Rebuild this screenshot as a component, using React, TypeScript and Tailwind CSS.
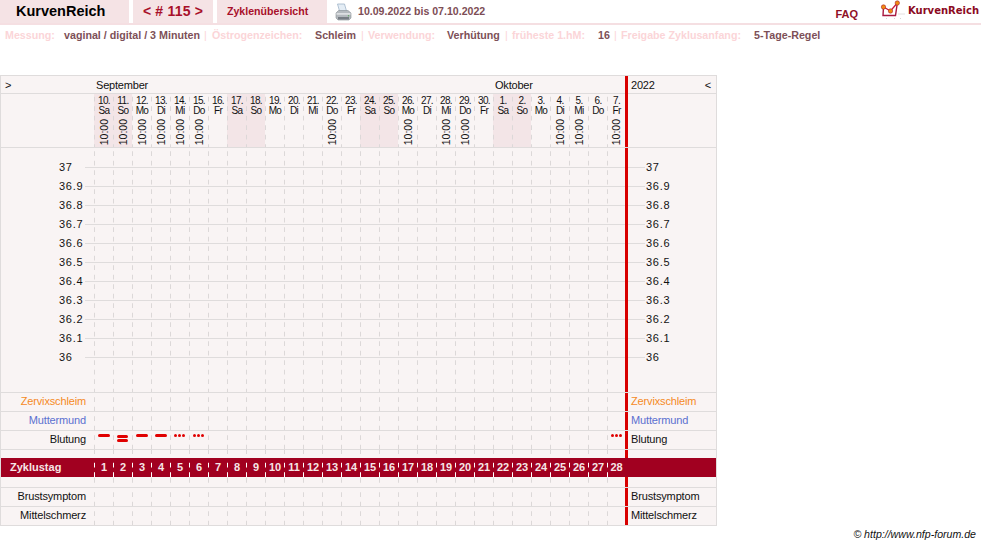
const cols = 'grid grid-cols-[93px_repeat(27,19px)_18px_3px_88px]'
const dash = 'bg-[linear-gradient(#dcd8d8_52%,transparent_52%)] bg-[length:1px_9.5px] bg-left bg-repeat-y'

const days = [
  ['10.', 'Sa', 1], ['11.', 'So', 1], ['12.', 'Mo', 1], ['13.', 'Di', 1], ['14.', 'Mi', 1], ['15.', 'Do', 1], ['16.', 'Fr', 0],
  ['17.', 'Sa', 0], ['18.', 'So', 0], ['19.', 'Mo', 0], ['20.', 'Di', 0], ['21.', 'Mi', 0], ['22.', 'Do', 1], ['23.', 'Fr', 0],
  ['24.', 'Sa', 0], ['25.', 'So', 0], ['26.', 'Mo', 1], ['27.', 'Di', 0], ['28.', 'Mi', 1], ['29.', 'Do', 1], ['30.', 'Fr', 0],
  ['1.', 'Sa', 0], ['2.', 'So', 0], ['3.', 'Mo', 0], ['4.', 'Di', 1], ['5.', 'Mi', 1], ['6.', 'Do', 0], ['7.', 'Fr', 1],
] as const

const temps = ['37', '36.9', '36.8', '36.7', '36.6', '36.5', '36.4', '36.3', '36.2', '36.1', '36']

function Cells({ render }: { render?: (i: number) => React.ReactNode }) {
  return (
    <>
      {days.map((_, i) => (
        <div key={i} className={`${dash} flex flex-col items-center`}>
          {render ? render(i) : null}
        </div>
      ))}
    </>
  )
}

function Row({ label, color = 'text-[#111]', blood = false }: { label: string; color?: string; blood?: boolean }) {
  return (
    <div className={`${cols} h-[19px] border-t border-[#dfdcdc] leading-[17px] tracking-[-0.15px]`}>
      <div className={`pr-[8px] text-right ${color}`}>{label}</div>
      <Cells render={blood ? (i) => <Blood i={i} /> : undefined} />
      <div className="bg-[#d80000]" />
      <div className={`pl-[3px] ${color}`}>{label}</div>
    </div>
  )
}

function Blood({ i }: { i: number }) {
  if (i === 1) {
    return (
      <div className="mt-[4px] flex flex-col gap-[1px]">
        <div className="h-[3px] w-[11px] rounded-full bg-[#e00000]" />
        <div className="h-[3px] w-[11px] rounded-full bg-[#e00000]" />
      </div>
    )
  }
  if (i === 0 || i === 2 || i === 3) return <div className="mt-[3px] h-[3px] w-[12px] rounded-full bg-[#e00000]" />
  if (i === 4 || i === 5 || i === 27) {
    return (
      <div className="mt-[3px] flex gap-[1px]">
        <div className="size-[3px] rounded-full bg-[#e00000]" />
        <div className="size-[3px] rounded-full bg-[#e00000]" />
        <div className="size-[3px] rounded-full bg-[#e00000]" />
      </div>
    )
  }
  return null
}

function Printer() {
  return (
    <svg width="17" height="18" viewBox="0 0 17 18">
      <path d="M2.5 1h7l2 7h-7z" fill="#e4edf5" stroke="#9fb4c8" strokeWidth="0.8" />
      <path d="M1 10l2.5-2.500h9.500l3 2.500v5l-2 2h-11l-2-2z" fill="#b4b9be" stroke="#8a9096" strokeWidth="0.6" />
      <path d="M1.500 10h14v1.800h-14z" fill="#dcdfe2" />
      <path d="M3 14h11v2.500h-11z" fill="#777d84" />
      <circle cx="13.500" cy="12.800" r="0.7" fill="#5fa85f" />
    </svg>
  )
}

function Logo() {
  return (
    <svg width="30" height="22" viewBox="0 0 30 22">
      <path d="M20 14h7" stroke="#e4e0e0" strokeWidth="1" />
      <path d="M8 18.500h1M16 18.500h1M22 18.500h1" stroke="#d8d4d4" strokeWidth="1" />
      <path d="M5.500 7L5 15.500h12.500L19.300 3" fill="none" stroke="#a81840" strokeWidth="1.400" />
      <path d="M5.500 7L12.500 11L19.300 3" fill="none" stroke="#c81838" strokeWidth="1.300" />
      <circle cx="5.500" cy="7" r="2.200" fill="#f08c10" stroke="#a82030" strokeWidth="0.600" />
      <circle cx="12.500" cy="11" r="2.200" fill="#f08c10" stroke="#a82030" strokeWidth="0.600" />
      <circle cx="19.300" cy="3" r="2.200" fill="#f08c10" stroke="#a82030" strokeWidth="0.600" />
    </svg>
  )
}

export default function App() {
  return (
    <div className="min-h-[545px] w-[981px] bg-white font-['Liberation_Sans',Arial,sans-serif] text-[11px] text-[#111]">
      <header className="relative flex h-[25px] border-b-2 border-[#f5dfe2]">
        <div className="flex w-[129px] items-center bg-[#f5e3e5] pl-[16px] text-[14.5px] font-bold text-black">KurvenReich</div>
        <div className="ml-[4px] flex w-[80px] items-center justify-center bg-[#f5e3e5] text-[14px] font-bold tracking-[0.2px] text-[#a8102a]">&lt; # 115 &gt;</div>
        <div className="ml-[4px] flex w-[110px] items-center bg-[#f5e3e5] pl-[10px] text-[10.6px] font-bold text-[#a8102a]">Zyklenübersicht</div>
        <div className="ml-[8px] flex items-center"><Printer /></div>
        <div className="ml-[6px] flex items-center text-[10.6px] font-bold text-[#7d4d55]">10.09.2022 bis 07.10.2022</div>
        <div className="ml-auto flex items-end pb-[1px] pr-[123px] text-[11px] font-bold text-[#8f1026]">FAQ</div>
        <div className="absolute left-[878px] top-0"><Logo /></div>
        <div className="absolute left-[908px] top-[3px] font-['DejaVu_Sans',sans-serif] text-[10px] font-bold text-[#8b0a22]">KurvenReich</div>
      </header>

      <div className="flex h-[50px] pt-[4px] text-[10.7px] font-bold leading-[13px] whitespace-nowrap text-[#7d5057]">
        <span className="ml-[5px] w-[59px] text-[#fbd5d8]">Messung:</span>
        <span className="w-[140px]">vaginal / digital / 3 Minuten</span>
        <span className="w-[8px] font-normal text-[#fbd5d8]">|</span>
        <span className="w-[103px] text-[#fbd5d8]">Östrogenzeichen:</span>
        <span className="w-[46px]">Schleim</span>
        <span className="w-[7px] font-normal text-[#fbd5d8]">|</span>
        <span className="w-[79px] text-[#fbd5d8]">Verwendung:</span>
        <span className="w-[58px]">Verhütung</span>
        <span className="w-[7px] font-normal text-[#fbd5d8]">|</span>
        <span className="w-[86px] text-[#fbd5d8]">früheste 1.hM:</span>
        <span className="w-[16px]">16</span>
        <span className="w-[7px] font-normal text-[#fbd5d8]">|</span>
        <span className="w-[133px] text-[#fbd5d8]">Freigabe Zyklusanfang:</span>
        <span>5-Tage-Regel</span>
      </div>

      <div className="w-[717px] border-x border-b border-[#dfdcdc] bg-[#f9f4f4]">
        {/* Monatszeile */}
        <div className={`${cols} h-[18px] border-t border-[#dfdcdc] leading-[18px] tracking-[-0.2px]`}>
          <div className="pl-[4px]">&gt;</div>
          <div className="col-span-21 pl-[2px]">September</div>
          <div className="col-span-7 pl-[2px]">Oktober</div>
          <div className="bg-[#d80000]" />
          <div className="flex justify-between px-[3px]"><span>2022</span><span className="pr-[2px]">&lt;</span></div>
        </div>

        {/* Tage */}
        <div className={`${cols} h-[54px] border-t border-[#dfdcdc]`}>
          <div />
          {days.map(([d, w, t], i) => (
            <div key={i} className={`${dash} flex flex-col items-center pt-[2px] pl-[1px] text-[10px] leading-[10px] tracking-[-0.6px] ${w === 'Sa' || w === 'So' ? 'bg-[#f3e5e7]' : ''}`}>
              <span>{d}</span>
              <span>{w}</span>
              {t ? <span className="mt-[3px] rotate-180 text-[10.5px] leading-[11px] tracking-[0px] [writing-mode:vertical-rl]">10:00</span> : null}
            </div>
          ))}
          <div className="bg-[#d80000]" />
          <div />
        </div>

        {/* Temperaturkurve */}
        <div className={`${cols} relative h-[245px] border-t border-[#dfdcdc]`}>
          <div />
          <Cells />
          <div className="bg-[#d80000]" />
          <div />
          <div className="absolute inset-x-0 top-0 flex flex-col pt-[10px]">
            {temps.map((t) => (
              <div key={t} className="flex h-[19px] items-center">
                <div className="w-[84px] pl-[58px] tracking-[0.7px]">{t}</div>
                <div className="h-px w-[540px] bg-[#dfdcdc]" />
                <div className="w-[3px]" />
                <div className="h-px w-[17px] bg-[#dfdcdc]" />
                <div className="pl-[1px] tracking-[0.7px]">{t}</div>
              </div>
            ))}
          </div>
        </div>

        <Row label="Zervixschleim" color="text-[#f58a1f]" />
        <Row label="Muttermund" color="text-[#5b70d0]" />
        <Row label="Blutung" blood />

        <div className={`${cols} h-[9px] border-t border-[#dfdcdc]`}>
          <div />
          <Cells />
          <div className="bg-[#d80000]" />
          <div />
        </div>

        <div className={`${cols} h-[19px] bg-[#a10020] font-bold leading-[19px] text-[#f6e6e6]`}>
          <div className="pl-[9px]">Zyklustag</div>
          {days.map((_, i) => (
            <div key={i} className="bg-[linear-gradient(#fff_50%,transparent_50%)] bg-[length:1px_9.5px] bg-left bg-repeat-y pl-[1px] text-center">
              {i + 1}
            </div>
          ))}
          <div />
          <div />
        </div>

        <div className={`${cols} h-[10px]`}>
          <div />
          <Cells />
          <div className="bg-[#d80000]" />
          <div />
        </div>

        <Row label="Brustsymptom" />
        <Row label="Mittelschmerz" />
      </div>

      <div className="w-[976px] pt-[1px] text-right text-[10.6px] leading-[14px] text-[#111] italic">© http://www.nfp-forum.de</div>
    </div>
  )
}
